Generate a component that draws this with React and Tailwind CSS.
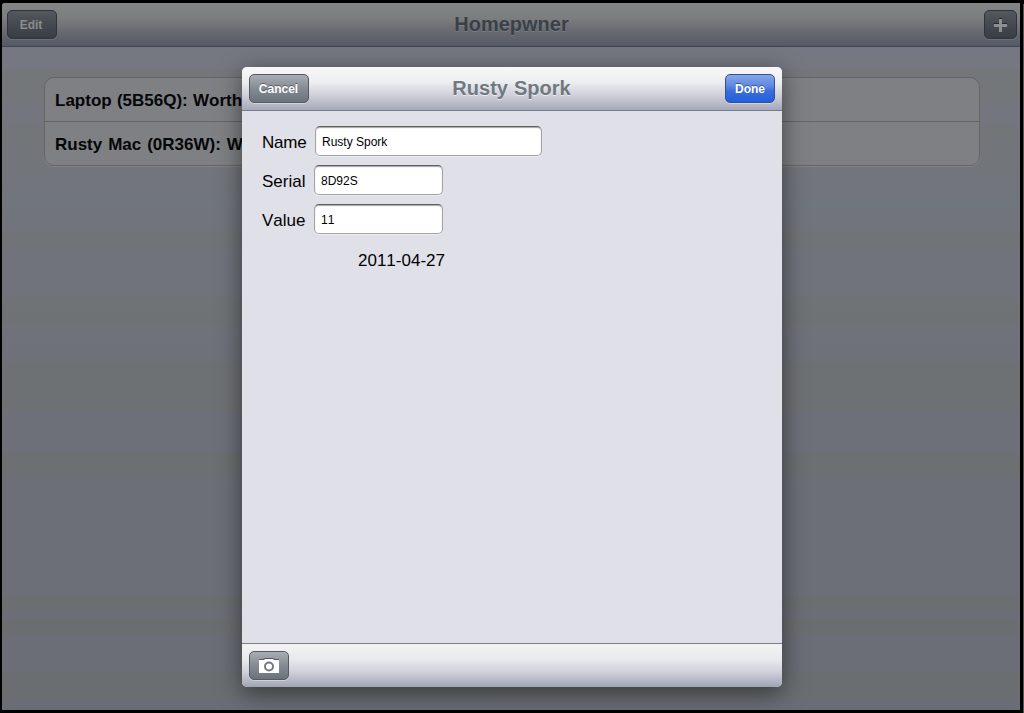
const rows = ['Laptop (5B56Q): Worth', 'Rusty Mac (0R36W): W'];

const darkButton =
  'flex h-[29px] items-center justify-center rounded-[5px] border border-[#2f333a] bg-linear-to-b from-[#55585d] via-[#454950] to-[#393d45] shadow-[0_1px_0_rgba(255,255,255,0.1)]';
const grayButton =
  'flex h-[29px] items-center justify-center rounded-[5px] border border-[#565a62] bg-linear-to-b from-[#a9adb3] via-[#868b93] to-[#6b727c] shadow-[0_1px_0_rgba(255,255,255,0.35)]';

function Field({ label, value, labelClass, inputWidth }) {
  return (
    <label className="flex h-[30px] items-center">
      <span className={'shrink-0 pt-[3px] text-[17px] leading-5 text-black ' + labelClass}>{label}</span>
      <input
        defaultValue={value}
        className={
          'h-[30px] rounded-[5px] border border-[#a3a3a6] border-t-[#5f5f62] bg-white px-1.5 pt-px text-xs text-black shadow-[inset_0_1px_1px_rgba(0,0,0,0.35),0_1px_0_rgba(255,255,255,0.4)] outline-none ' +
          inputWidth
        }
      />
    </label>
  );
}

export default function App() {
  return (
    <div className="relative flex h-[713px] w-[1024px] overflow-hidden bg-black pt-[3px] pr-1 pb-[3px] pl-0.5 font-['Liberation_Sans',Arial,sans-serif] [font-kerning:none]">
      <div className="flex min-w-0 flex-1 flex-col overflow-hidden rounded-tl-[3px] bg-[linear-gradient(180deg,#757882_44px,#757881_65px,#73777a_67px,#73777a_98px,#73767f_101px,#73767e_122px,#727679_125px,#72757a_165px,#71757c_200px,#71747a_228px,#707476_231px,#707476_245px,#70737c_248px,#70737b_292px,#6f7375_296px,#6f7275_322px,#6f727b_326px,#6e717a_356px,#6e7173_360px,#6e7173_406px,#6d7079_412px,#6d7079_448px,#6c7072_452px,#6c7072_472px,#6c6f78_478px,#6c6f78_590px,#6b6f71_594px,#6b6f71_604px,#6b6e76_608px,#6b6e76_614px,#6b6e71_617px,#6b6e71_630px,#6b6e77_636px,#6b6e77_668px,#6a6e70_672px,#6a6e70_694px,#6a6d76_698px)]">
        <header className="flex h-11 shrink-0 items-center justify-between border-b border-[#414550] bg-[linear-gradient(180deg,#858587_0%,#7b7d7f_35%,#696b72_65%,#555964_100%)] pr-[3px] pl-[5px]">
          <button className={darkButton + ' w-[50px] pr-0.5 text-xs font-bold text-[#8b8c8e]'}>Edit</button>
          <h1 className="mr-[18px] pb-px text-[20px] font-bold text-[#3a4047] [text-shadow:0_1px_0_rgba(255,255,255,0.15)]">
            Homepwner
          </h1>
          <button className={darkButton + ' w-[33px]'} aria-label="Add">
            <svg width="13" height="14" viewBox="0 0 13 14">
              <path d="M5 0h3v5h5v3H8v5H5V8H0V5h5z" fill="#25282d" />
              <path d="M5 1h3v5h5v3H8v5H5V9H0V6h5z" fill="#8e8f91" />
            </svg>
          </button>
        </header>
        <ul className="mr-10 ml-[42px] mt-[30px] overflow-hidden rounded-[10px] border border-[#636568] bg-[#7f8083] shadow-[0_1px_0_rgba(255,255,255,0.1)]">
          {rows.map((row, i) => (
            <li
              key={row}
              className={
                'flex items-center px-2.5 pt-0.5 text-[17px] font-bold whitespace-nowrap text-[#050608] ' +
                (i ? 'h-[43px] [word-spacing:1.2px]' : 'h-11 border-b border-[#636568] [word-spacing:0.5px]')
              }
            >
              {row}
            </li>
          ))}
        </ul>
      </div>

      <div className="absolute top-1 right-0 h-[709px] w-px bg-[#555]" />

      <section className="absolute top-[67px] left-[242px] flex h-[620px] w-[540px] flex-col overflow-hidden rounded-[5px] bg-[#e0e0e9] shadow-[0_6px_24px_rgba(0,0,0,0.5)]">
        <header className="flex h-11 shrink-0 items-center justify-between border-b border-[#777c8c] bg-[linear-gradient(180deg,#f8f8f9_0%,#edeef1_35%,#cdced8_67%,#a5a8b8_100%)] px-[7px]">
          <button className={grayButton + ' w-[60px] pr-px text-xs font-bold text-white [text-shadow:0_-1px_0_rgba(0,0,0,0.4)]'}>
            Cancel
          </button>
          <h2 className="pr-[11px] pb-0.5 text-[20px] font-bold text-[#71787f] [text-shadow:0_1px_0_rgba(255,255,255,0.6)] [word-spacing:0.5px]">
            Rusty Spork
          </h2>
          <button className="flex h-[29px] w-[50px] items-center justify-center rounded-[5px] border border-[#35528f] bg-[linear-gradient(180deg,#86a6e8_0%,#5f88e0_40%,#3a6ddc_60%,#2060dc_100%)] text-xs font-bold text-white shadow-[0_1px_0_rgba(255,255,255,0.35)] [text-shadow:0_-1px_0_rgba(0,0,0,0.4)]">
            Done
          </button>
        </header>
        <div className="flex flex-1 flex-col gap-[9px] pt-[15px] pl-5">
          <Field label="Name" value="Rusty Spork" labelClass="w-[53px] tracking-[-0.2px]" inputWidth="w-[227px]" />
          <Field label="Serial" value="8D92S" labelClass="w-[52px]" inputWidth="w-[129px]" />
          <Field label="Value" value="11" labelClass="w-[52px]" inputWidth="w-[129px]" />
          <p className="pt-2 pl-24 text-[17px] leading-5 text-black">2011-04-27</p>
        </div>
        <footer className="flex h-11 shrink-0 items-center border-t border-[#7e7f85] bg-[linear-gradient(180deg,#f3f3f5_0%,#e9eaed_35%,#cdced8_67%,#a0a4b4_100%)] px-[7px]">
          <button className={grayButton + ' w-10'} aria-label="Take photo">
            <svg width="20" height="17" viewBox="0 0 20 17">
              <path d="M0 2h4l2-1h8l2 1h4v3H0z" fill="#555b64" />
              <path d="M0 3h5l1-1h8l1 1h5v13H0z" fill="#fff" />
              <circle cx="10" cy="9.500" r="4" fill="none" stroke="#727983" strokeWidth="2" />
            </svg>
          </button>
        </footer>
      </section>
    </div>
  );
}
